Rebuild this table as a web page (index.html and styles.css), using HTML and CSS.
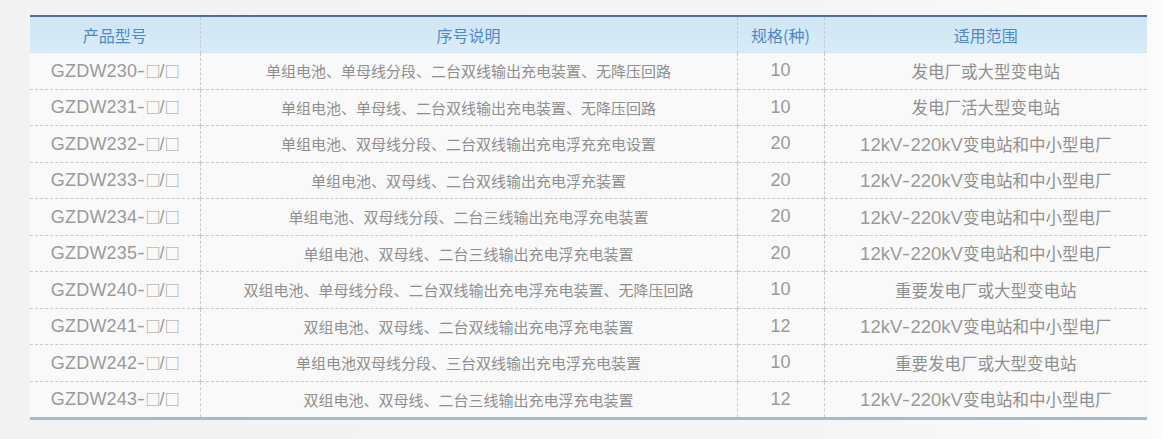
FILE: index.html
```html
<!DOCTYPE html>
<html lang="zh-CN">
<head>
<meta charset="utf-8">
<title>产品型号</title>
<link rel="stylesheet" href="styles.css">
</head>
<body>
<div class="page">
  <table class="spec">
    <colgroup>
      <col class="c-model">
      <col class="c-desc">
      <col class="c-spec">
      <col class="c-range">
    </colgroup>
    <thead>
      <tr>
        <th>产品型号</th>
        <th>序号说明</th>
        <th>规格(种)</th>
        <th>适用范围</th>
      </tr>
    </thead>
    <tbody>
      <tr><td class="model">GZDW230<span class="dash">-</span><span class="sq">□</span>/<span class="sq">□</span></td><td class="desc">单组电池、单母线分段、二台双线输出充电装置、无降压回路</td><td class="num">10</td><td class="range">发电厂或大型变电站</td></tr>
      <tr><td class="model">GZDW231<span class="dash">-</span><span class="sq">□</span>/<span class="sq">□</span></td><td class="desc">单组电池、单母线、二台双线输出充电装置、无降压回路</td><td class="num">10</td><td class="range">发电厂活大型变电站</td></tr>
      <tr><td class="model">GZDW232<span class="dash">-</span><span class="sq">□</span>/<span class="sq">□</span></td><td class="desc">单组电池、双母线分段、二台双线输出充电浮充充电设置</td><td class="num">20</td><td class="range"><span class="lat">12kV<span class="dash">-</span>220kV</span>变电站和中小型电厂</td></tr>
      <tr><td class="model">GZDW233<span class="dash">-</span><span class="sq">□</span>/<span class="sq">□</span></td><td class="desc">单组电池、双母线、二台双线输出充电浮充装置</td><td class="num">20</td><td class="range"><span class="lat">12kV<span class="dash">-</span>220kV</span>变电站和中小型电厂</td></tr>
      <tr><td class="model">GZDW234<span class="dash">-</span><span class="sq">□</span>/<span class="sq">□</span></td><td class="desc">单组电池、双母线分段、二台三线输出充电浮充电装置</td><td class="num">20</td><td class="range"><span class="lat">12kV<span class="dash">-</span>220kV</span>变电站和中小型电厂</td></tr>
      <tr><td class="model">GZDW235<span class="dash">-</span><span class="sq">□</span>/<span class="sq">□</span></td><td class="desc">单组电池、双母线、二台三线输出充电浮充电装置</td><td class="num">20</td><td class="range"><span class="lat">12kV<span class="dash">-</span>220kV</span>变电站和中小型电厂</td></tr>
      <tr><td class="model">GZDW240<span class="dash">-</span><span class="sq">□</span>/<span class="sq">□</span></td><td class="desc">双组电池、单母线分段、二台双线输出充电浮充电装置、无降压回路</td><td class="num">10</td><td class="range">重要发电厂或大型变电站</td></tr>
      <tr><td class="model">GZDW241<span class="dash">-</span><span class="sq">□</span>/<span class="sq">□</span></td><td class="desc">双组电池、双母线、二台双线输出充电浮充电装置</td><td class="num">12</td><td class="range"><span class="lat">12kV<span class="dash">-</span>220kV</span>变电站和中小型电厂</td></tr>
      <tr><td class="model">GZDW242<span class="dash">-</span><span class="sq">□</span>/<span class="sq">□</span></td><td class="desc">单组电池双母线分段、三台双线输出充电浮充电装置</td><td class="num">10</td><td class="range">重要发电厂或大型变电站</td></tr>
      <tr><td class="model">GZDW243<span class="dash">-</span><span class="sq">□</span>/<span class="sq">□</span></td><td class="desc">双组电池、双母线、二台三线输出充电浮充电装置</td><td class="num">12</td><td class="range"><span class="lat">12kV<span class="dash">-</span>220kV</span>变电站和中小型电厂</td></tr>
    </tbody>
  </table>
</div>
</body>
</html>
```

FILE: styles.css
```css
html, body {
  margin: 0;
  padding: 0;
}

body {
  background: linear-gradient(90deg, #f2f2f2 0%, #f5f5f5 70%, #fbfbfb 100%);
  font-family: "Liberation Sans", "Noto Sans CJK SC", sans-serif;
  color: #999999;
  width: 1162px;
  height: 439px;
  overflow: hidden;
}

.page {
  padding: 15px 0 0 30px;
}

.spec {
  width: 1117px;
  table-layout: fixed;
  border-collapse: collapse;
  border-top: 2px solid #4f6d90;
  border-bottom: 3px solid #a7b9d0;
}

.c-model { width: 170px; }
.c-desc  { width: 537px; }
.c-spec  { width: 87px; }
.c-range { width: 323px; }

.spec th {
  height: 35px;
  padding: 0;
  background: linear-gradient(180deg, #cfe5f3 0%, #d8ecf8 100%);
  color: #5089c6;
  font-family: "Noto Sans CJK SC", sans-serif;
  font-size: 16px;
  font-weight: normal;
  text-align: center;
  vertical-align: middle;
}

.spec th + th,
.spec td + td {
  border-left: 1px dashed #c9c9c9;
}

.spec td {
  height: 35.5px;
  padding: 0;
  text-align: center;
  vertical-align: middle;
  background: #f9f9f9;
  white-space: nowrap;
  border-top: 1px dashed #cacaca;
}

.spec tbody tr:first-child td {
  border-top-color: transparent;
}

.model {
  font-family: "Liberation Sans", sans-serif;
  font-size: 18px;
  color: #9a9a9a;
  letter-spacing: 0.2px;
}

.dash {
  display: inline-block;
  transform: scaleX(1.3);
  margin: 0 1px;
}

.sq {
  font-family: "Noto Sans CJK SC", sans-serif;
  font-size: 15px;
  letter-spacing: -1px;
}

.desc {
  font-family: "Noto Sans CJK SC", sans-serif;
  font-size: 15px;
  color: #8f8f8f;
}

.num {
  font-family: "Liberation Sans", sans-serif;
  font-size: 18px;
  color: #9a9a9a;
}

.range {
  font-family: "Noto Sans CJK SC", sans-serif;
  font-size: 16.5px;
  color: #8f8f8f;
}

.lat {
  font-family: "Liberation Sans", sans-serif;
  font-size: 18.5px;
  color: #999999;
}
```
